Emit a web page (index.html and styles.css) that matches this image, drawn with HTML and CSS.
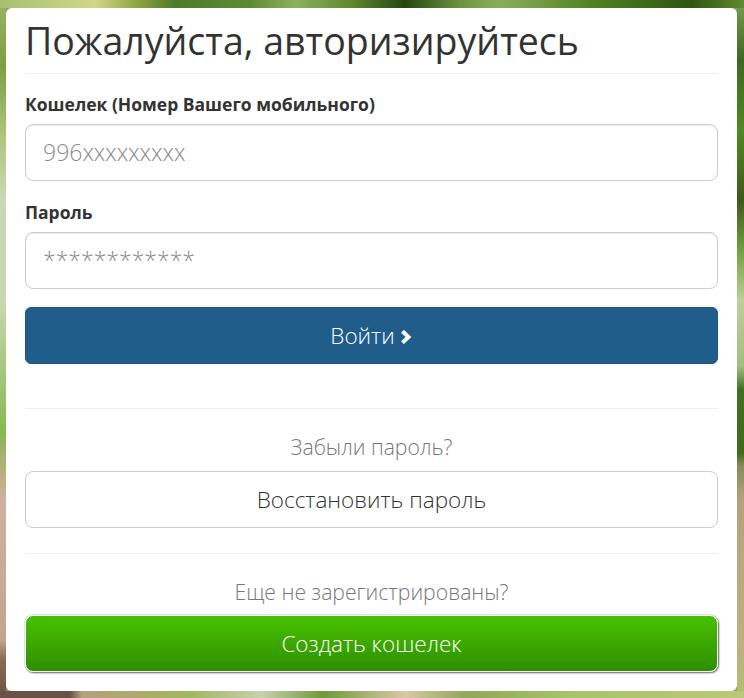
FILE: index.html
```html
<!DOCTYPE html>
<html lang="ru">
<head>
<meta charset="utf-8">
<title>Авторизация</title>
<link rel="stylesheet" href="styles.css">
</head>
<body>
<main class="card">
  <h1 class="title">Пожалуйста, авторизируйтесь</h1>
  <hr class="rule rule-title">
  <form class="form">
    <label class="label" for="wallet">Кошелек (Номер Вашего мобильного)</label>
    <input class="input" id="wallet" type="text" placeholder="996xxxxxxxxx">
    <label class="label label-pass" for="pass">Пароль</label>
    <input class="input" id="pass" type="text" placeholder="************">
    <button class="btn btn-blue" type="button">Войти <svg class="chev" viewBox="0 0 13 14" width="13" height="14"><path d="M2.5 1.3 8.5 7 2.5 12.7" fill="none" stroke="#fff" stroke-width="4"/></svg></button>
  </form>
  <hr class="rule rule-login">
  <p class="hint hint-forgot">Забыли пароль?</p>
  <a class="btn btn-white">Восстановить пароль</a>
  <hr class="rule rule-reg">
  <p class="hint hint-reg">Еще не зарегистрированы?</p>
  <a class="btn btn-green">Создать кошелек</a>
</main>
</body>
</html>
```
FILE: styles.css
```css
* { box-sizing: border-box; }
html, body { margin: 0; height: 698px; overflow: hidden; }
body {
  font-family: "Open Sans", "Liberation Sans", sans-serif;
  color: #333;
  padding: 8px 7px 7px 6px;
  background-color: #9a9a70;
  background-image:
    linear-gradient(90deg, #a9c070 0, #d0d888 95px, #8ba040 140px, #4d7a28 175px, #5f8a35 250px, #8db060 295px, #5f8a30 350px, #264510 405px, #6d9440 460px, #8cae5c 500px, #4f8020 595px, #2f5512 690px, #5d8a30 744px),
    linear-gradient(90deg, #6b5248 0, #6b5248 70px, #b5a080 82px, #acaa6a 143px, #a0b860 190px, #c8d0b0 262px, #6f9a3a 323px, #d8c8a8 405px, #8fa85a 466px, #a8c468 570px, #b9c87a 744px),
    linear-gradient(180deg, #9ab566 0, #7d9f40 66px, #b0c880 140px, #c8d8b8 200px, #c8d8b0 300px, #88b850 433px, #b8b080 473px, #d0b0a0 500px, #c0a590 640px, #8b6a50 660px, #6b5248 698px),
    linear-gradient(180deg, #7aa050 0, #3d6820 60px, #4f8a20 130px, #3d5a18 200px, #6fa040 250px, #bcd098 300px, #a0c080 366px, #3f7020 390px, #3f6a1c 453px, #8a8a5a 466px, #b5a27c 500px, #c0b080 650px, #b0c070 698px);
  background-size: 100% 8px, 100% 7px, 6px 100%, 7px 100%;
  background-position: 0 0, 0 100%, 0 0, 100% 0;
  background-repeat: no-repeat;
}
.card {
  height: 683px;
  background: #fff;
  border-radius: 6px;
  padding: 0 19px;
}
.title {
  margin: 0;
  padding-top: 8px;
  font-size: 37.5px;
  line-height: 50px;
  font-weight: 400;
  color: #333;
}
.rule { border: 0; border-top: 1px solid #eee; margin: 0; }
.rule-title { margin-top: 7px; }
.rule-login { margin-top: 44px; }
.rule-reg { margin-top: 25px; }
.form { display: flex; flex-direction: column; }
.label {
  font-size: 17.5px;
  font-weight: 700;
  line-height: 22px;
  margin-top: 19px;
  margin-bottom: 9px;
}
.label-pass { margin-top: 20px; }
.input {
  height: 57px;
  width: 100%;
  border: 1px solid #ccc;
  border-radius: 8px;
  padding: 0 17px 2px;
  font: 300 23px "Open Sans", "Liberation Sans", sans-serif;
  color: #555;
  box-shadow: inset 0 1px 1px rgba(0,0,0,.075);
  background: #fff;
}
.input::placeholder { color: #8a8a8a; opacity: 1; }
.btn {
  display: flex;
  align-items: center;
  justify-content: center;
  gap: 5px;
  height: 57px;
  width: 100%;
  border-radius: 6px;
  font: 300 22.5px "Open Sans", "Liberation Sans", sans-serif;
}
.btn-blue {
  margin-top: 18px;
  border: 1px solid #1d5480;
  background: #215d8b;
  color: #fff;
}
.chev { margin-top: 3px; }
.btn-white { border: 1px solid #ccc; background: #fff; color: #333; border-radius: 8px; }
.btn-green {
  border: 1px solid #fff;
  border-radius: 8px;
  background: linear-gradient(180deg, #48c100 0, #2f8e00 100%);
  color: #fff;
  box-shadow: 1px 1px 2px rgba(0,0,0,.55), 0 0 2px rgba(0,0,0,.35);
}
.hint {
  margin: 0;
  text-align: center;
  font-size: 21.2px;
  font-weight: 300;
  line-height: 27px;
  color: #777;
}
.hint-forgot { margin-top: 24px; margin-bottom: 11px; }
.hint-reg { margin-top: 24px; margin-bottom: 10px; }
```
